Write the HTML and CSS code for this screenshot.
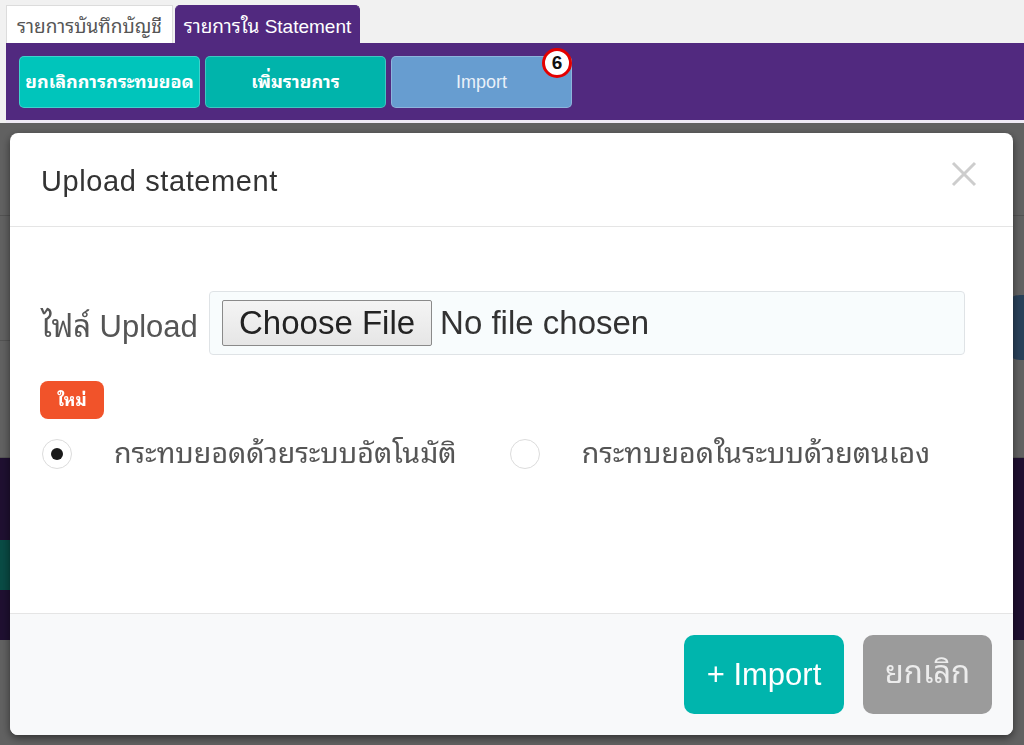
FILE: index.html
```html
<!DOCTYPE html>
<html lang="th">
<head>
<meta charset="utf-8">
<title>Upload statement</title>
<link rel="stylesheet" href="styles.css">
</head>
<body>
<div class="page">
  <div class="tabs">
    <div class="tab">รายการบันทึกบัญชี</div>
    <div class="tab tab-active">รายการใน Statement</div>
  </div>
  <div class="toolbar">
    <button class="tbtn tbtn-teal">ยกเลิกการกระทบยอด</button>
    <button class="tbtn tbtn-teal2">เพิ่มรายการ</button>
    <button class="tbtn tbtn-blue">Import<span class="step">6</span></button>
  </div>
  <div class="under">
    <div class="u-row u-row1"></div>
    <div class="u-row u-row2"><span class="u-pill"></span></div>
    <div class="u-row u-row3"></div>
    <div class="u-band"><div class="u-band-top"></div><div class="u-teal"></div></div>
    <div class="u-rest"></div>
  </div>
</div>

<div class="overlay">
  <div class="modal">
    <div class="modal-header">
      <h4 class="modal-title">Upload statement</h4>
      <svg class="close" width="26" height="26" viewBox="0 0 26 26"><path d="M2 2 L24 24 M24 2 L2 24" stroke="#cdcdcd" stroke-width="3" fill="none"/></svg>
    </div>
    <div class="modal-body">
      <div class="form-row">
        <label class="form-label">ไฟล์ Upload</label>
        <div class="file-box">
          <span class="file-btn">Choose File</span>
          <span class="file-name">No file chosen</span>
        </div>
      </div>
      <span class="badge-new">ใหม่</span>
      <div class="radios">
        <label class="radio"><span class="radio-dot checked"></span><span class="radio-text">กระทบยอดด้วยระบบอัตโนมัติ</span></label>
        <label class="radio"><span class="radio-dot"></span><span class="radio-text">กระทบยอดในระบบด้วยตนเอง</span></label>
      </div>
    </div>
    <div class="modal-footer">
      <button class="fbtn fbtn-import">+ Import</button>
      <button class="fbtn fbtn-cancel">ยกเลิก</button>
    </div>
  </div>
</div>
</body>
</html>
```

FILE: styles.css
```css
* { box-sizing: border-box; }
html, body { margin: 0; padding: 0; }
body {
  width: 1024px;
  height: 745px;
  overflow: hidden;
  background: #f1f1f1;
  font-family: "Liberation Sans", Arial, "Noto Sans Thai Looped", Tahoma, Loma, Garuda, Waree, "Noto Sans Thai", sans-serif;
}
.page { display: flex; flex-direction: column; }

.tabs {
  display: flex;
  padding: 5px 0 0 6px;
  height: 43px;
  gap: 2px;
}
.tab {
  width: 167px;
  height: 38px;
  display: flex;
  align-items: center;
  justify-content: center;
  background: #fff;
  border: 1px solid #dcdcdc;
  border-bottom: none;
  color: #555;
  font-size: 19px;
}
.tab-active {
  width: 185px;
  background: #51297f;
  border-color: #51297f;
  color: #fff;
  border-radius: 5px 5px 0 0;
}

.toolbar {
  margin-left: 6px;
  height: 80px;
  background: #51297f;
  border-bottom: 3px solid #efeaf5;
  display: flex;
  align-items: flex-start;
  gap: 5px;
  padding: 13px 0 0 13px;
}
.tbtn {
  position: relative;
  width: 181px;
  height: 52px;
  border: 1px solid rgba(255,255,255,0.25);
  border-radius: 5px;
  font-family: inherit;
  font-size: 18px;
  color: #fff;
  padding: 0;
}
.tbtn-teal { background: #00c5bb; font-weight: bold; padding-bottom: 4px; }
.tbtn-teal2 { background: #00b4ab; font-weight: bold; padding-bottom: 4px; }
.tbtn-blue { background: #679dd0; color: #e9f1f9; }
.step {
  position: absolute;
  top: -9px;
  right: -1px;
  width: 30px;
  height: 30px;
  border-radius: 50%;
  border: 3px solid #e40000;
  background: #fff;
  color: #111;
  font-weight: bold;
  font-size: 19px;
  line-height: 24px;
  text-align: center;
}

.under { height: 622px; background: #fff; display: flex; flex-direction: column; }
.u-row { border-bottom: 1px solid #d8d8d8; display: flex; justify-content: flex-end; }
.u-row1 { height: 93px; }
.u-row2 { height: 125px; align-items: flex-start; }
.u-pill { width: 60px; height: 65px; margin-top: 79px; margin-right: -40px; background: #6babeb; border-radius: 16px; }
.u-row3 { height: 117px; }
.u-band { height: 182px; background: #51297f; display: flex; flex-direction: column; }
.u-band-top { height: 82px; }
.u-teal { height: 50px; width: 120px; background: #19c4b4; }
.u-rest { flex: 1; background: #fff; }

.overlay {
  position: fixed;
  top: 123px;
  left: 0;
  right: 0;
  bottom: 0;
  background: rgba(0,0,0,0.62);
  padding: 10px 11px 10px 10px;
  display: flex;
}
.modal {
  flex: 1;
  background: #fff;
  border-radius: 8px;
  box-shadow: 0 3px 9px rgba(0,0,0,0.5);
  display: flex;
  flex-direction: column;
  overflow: hidden;
}
.modal-header {
  height: 94px;
  border-bottom: 1px solid #e5e5e5;
  display: flex;
  align-items: center;
  justify-content: space-between;
  padding: 4px 36px 0 31px;
}
.modal-title {
  margin: 0;
  font-weight: normal;
  font-size: 29px;
  color: #333;
  letter-spacing: 0.6px;
}
.close { display: block; margin-top: -16px; }

.modal-body {
  flex: 1;
  padding: 64px 48px 0 31px;
  display: flex;
  flex-direction: column;
  align-items: flex-start;
}
.form-row { display: flex; align-items: center; align-self: stretch; }
.form-label {
  width: 168px;
  font-size: 31px;
  color: #555;
  white-space: nowrap;
}
.file-box {
  flex: 1;
  height: 64px;
  border: 1px solid #dfe3e6;
  border-radius: 4px;
  background: #f8fcfd;
  display: flex;
  align-items: center;
  padding-left: 12px;
  gap: 10px;
  font-size: 33px;
}
.file-btn {
  height: 46px;
  padding: 0 16px;
  border: 1px solid #8a8a8a;
  border-radius: 2px;
  background: linear-gradient(#f4f4f4, #e6e6e6);
  color: #222;
  display: flex;
  align-items: center;
}
.file-name { color: #333; margin-left: -2px; }

.badge-new {
  margin-top: 26px;
  margin-left: -1px;
  width: 64px;
  height: 38px;
  border-radius: 8px;
  background: #f1532a;
  color: #fff;
  font-weight: bold;
  font-size: 17px;
  padding-bottom: 3px;
  display: flex;
  align-items: center;
  justify-content: center;
}
.radios {
  margin-top: 20px;
  display: flex;
  align-items: center;
  gap: 52px;
}
.radio { display: flex; align-items: center; gap: 42px; height: 30px; }
.radio-dot {
  width: 30px;
  height: 30px;
  border-radius: 50%;
  border: 1px solid #dcdcdc;
  background: #fff;
  margin-left: 1px;
  display: flex;
  align-items: center;
  justify-content: center;
}
.radio-dot.checked::after {
  content: "";
  width: 12px;
  height: 12px;
  border-radius: 50%;
  background: #1a1a1a;
}
.radio-text { font-size: 28.6px; color: #555; line-height: 30px; margin-top: -3px; }

.modal-footer {
  height: 122px;
  border-top: 1px solid #e5e5e5;
  background: #f8f9fa;
  display: flex;
  justify-content: flex-end;
  align-items: flex-start;
  gap: 19px;
  padding: 21px 21px 0 0;
}
.fbtn {
  height: 79px;
  border: none;
  border-radius: 10px;
  font-family: inherit;
  font-size: 31px;
  padding: 0;
}
.fbtn-import { width: 160px; background: #00b5ad; color: #fff; }
.fbtn-cancel { width: 129px; background: #9b9b9b; color: #ececec; padding-bottom: 11px; }
```
